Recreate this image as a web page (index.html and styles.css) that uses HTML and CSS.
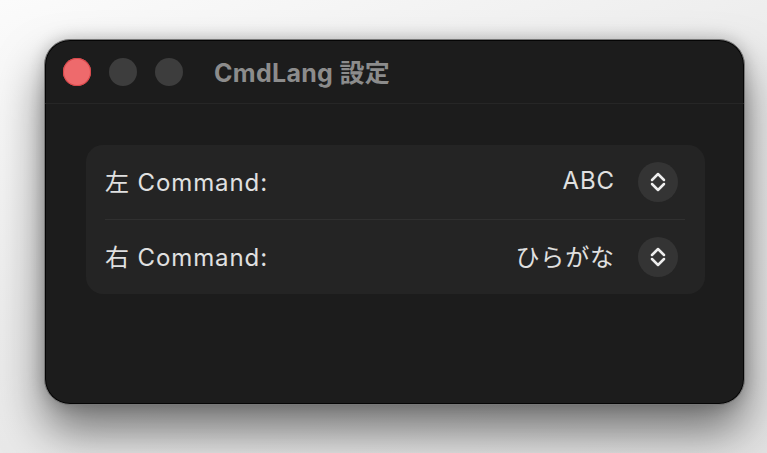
FILE: index.html
```html
<!DOCTYPE html>
<html lang="ja">
  <head>
    <meta charset="UTF-8" />
    <meta name="viewport" content="width=device-width, initial-scale=1.0" />
    <title>CmdLang 設定</title>
    <link rel="stylesheet" href="styles.css">
  </head>
  <body>
    <div class="desk">
      <div class="window flex column">
        <div class="titlebar flex align">
          <div class="lights flex align">
            <span class="light red"></span>
            <span class="light"></span>
            <span class="light"></span>
          </div>
          <div class="title">CmdLang 設定</div>
        </div>
        <div class="main">
          <div class="card flex column">
            <div class="row flex align space">
              <span class="label">左 Command:</span>
              <div class="pick flex align">
                <span class="value">ABC</span>
                <span class="stepper flex center">
                  <svg width="16" height="22" viewBox="0 0 16 22">
                    <path d="M2 9 L8 3 L14 9 M2 13 L8 19 L14 13" />
                  </svg>
                </span>
              </div>
            </div>
            <div class="line"></div>
            <div class="row flex align space">
              <span class="label">右 Command:</span>
              <div class="pick flex align">
                <span class="value">ひらがな</span>
                <span class="stepper flex center">
                  <svg width="16" height="22" viewBox="0 0 16 22">
                    <path d="M2 9 L8 3 L14 9 M2 13 L8 19 L14 13" />
                  </svg>
                </span>
              </div>
            </div>
          </div>
        </div>
      </div>
    </div>
  </body>
</html>
```

FILE: styles.css
```css
* {
  margin: 0;
  padding: 0;
  box-sizing: border-box;
}
body {
  width: 767px;
  height: 453px;
  overflow: hidden;
  background: linear-gradient(160deg, #fbfbfb 0%, #ececec 45%, #e2e2e2 100%);
  font-family: "Inter", "Liberation Sans", "Noto Sans CJK JP", sans-serif;
}
.flex {
  display: flex;
}
.column {
  flex-direction: column;
}
.align {
  align-items: center;
}
.space {
  justify-content: space-between;
}
.center {
  justify-content: center;
  align-items: center;
}

.desk {
  padding: 39px 0 0 44px;
}
.window {
  width: 701px;
  height: 366px;
  background-color: #1c1c1c;
  border: 1px solid #787878;
  border-radius: 26px;
  box-shadow: 0 0 0 1px #050505 inset, 0 26px 46px rgba(0, 0, 0, 0.5),
    0 0 16px rgba(0, 0, 0, 0.2);
  overflow: hidden;
}

.titlebar {
  height: 64px;
  border-bottom: 1px solid #262626;
  padding-left: 18px;
}
.lights {
  gap: 18px;
}
.light {
  width: 28px;
  height: 28px;
  border-radius: 50%;
  background-color: #3d3d3d;
}
.light.red {
  background-color: #ee6a6c;
  box-shadow: 0 0 0 1px #d9474a inset;
}
.title {
  margin-left: 31px;
  padding-bottom: 2px;
  font-size: 25px;
  font-weight: 700;
  letter-spacing: 0.3px;
  color: #8c8c8c;
}

.main {
  padding: 41px 39px 0 41px;
}
.card {
  background-color: #242424;
  border-radius: 17px;
}
.row {
  height: 74px;
  padding: 0 27px 0 19px;
}
.line {
  height: 1px;
  margin: 0 20px 0 19px;
  background-color: #303030;
}
.label,
.value {
  padding-bottom: 4px;
  font-size: 24px;
  letter-spacing: 0.9px;
  color: #e0e0e0;
}
.pick {
  gap: 23px;
}
.stepper {
  width: 40px;
  height: 40px;
  border-radius: 50%;
  background-color: #343434;
}
.stepper svg path {
  fill: none;
  stroke: #ededed;
  stroke-width: 2.5;
  stroke-linecap: round;
  stroke-linejoin: round;
}
```
